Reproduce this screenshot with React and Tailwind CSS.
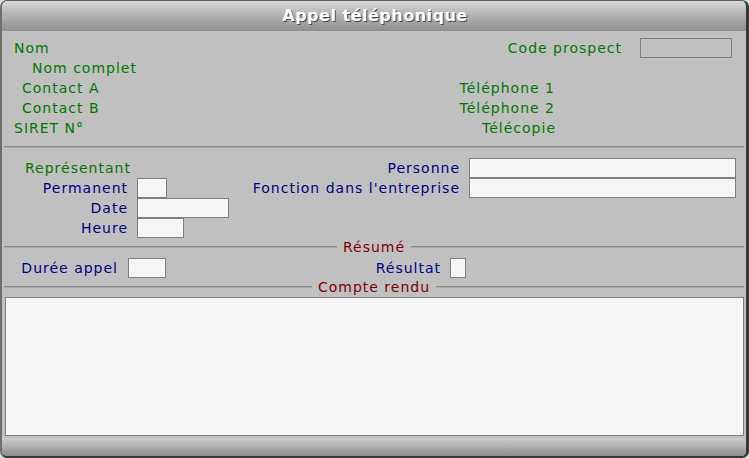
import React from "react";

const F = { fontFamily: '"DejaVu Sans", Verdana, sans-serif' };

function Line() {
  return <div className="flex-1 h-[2px] border-t border-t-[#8a8a8a] bg-[#a8a8a8]" />;
}

function Box({ w, dis }) {
  return (
    <div
      className={`h-[20px] border border-[#7f7f7f] ${dis ? "bg-[#c0c0c0]" : "bg-[#f6f6f6]"}`}
      style={{ width: w }}
    />
  );
}

export default function App() {
  const g = "text-[#007800]";
  const b = "text-[#000080]";
  const r = "text-[#800000]";
  return (
    <div className="w-[749px] h-[458px] bg-[#cfe6e2]" style={F}>
      <div className="w-full h-full rounded-[7px] overflow-hidden border-l-2 border-l-[#6e6e6e] border-r-[3px] border-r-[#383838] border-b-2 border-b-[#383838] border-t border-t-[#5a5a5a] bg-[#c0c0c0] flex flex-col text-[14px] tracking-[1px] leading-[20px]">
        <div className="h-[30px] shrink-0 bg-gradient-to-b from-[#d6d6d6] to-[#8e8e8e] flex items-center justify-center">
          <span className="text-white font-bold text-[16px] tracking-[0.5px] [text-shadow:1px_1px_0_#4a4a4a] pl-[2px]">
            Appel téléphonique
          </span>
        </div>

        <div className="mt-[7px] h-[20px] flex items-center">
          <div className={`flex-1 pl-[12px] ${g}`}>Nom</div>
          <div className={`${g} mr-[18px]`}>Code prospect</div>
          <div className="-mt-[1px]"><Box w={92} dis /></div>
          <div className="w-[14px]" />
        </div>
        <div className="h-[20px] flex items-center">
          <div className={`pl-[30px] ${g}`}>Nom complet</div>
        </div>
        <div className="h-[20px] flex items-center">
          <div className={`w-[398px] pl-[20px] ${g}`}>Contact A</div>
          <div className={`w-[155px] text-right ${g}`}>Téléphone 1</div>
        </div>
        <div className="h-[20px] flex items-center">
          <div className={`w-[398px] pl-[20px] ${g}`}>Contact B</div>
          <div className={`w-[155px] text-right ${g}`}>Téléphone 2</div>
        </div>
        <div className="h-[20px] flex items-center">
          <div className={`w-[398px] pl-[12px] ${g}`}>SIRET N°</div>
          <div className={`w-[156px] text-right ${g}`}>Télécopie</div>
        </div>

        <div className="mt-[8px] mx-[2px] flex">
          <Line />
        </div>

        <div className="mt-[10px] h-[20px] flex items-center">
          <div className={`flex-1 pl-[23px] ${g} -mt-[1px]`}>Représentant</div>
          <div className={`${b} -mt-[1px]`}>Personne</div>
          <div className="w-[9px]" />
          <Box w={267} />
          <div className="w-[10px]" />
        </div>
        <div className="h-[20px] flex items-center">
          <div className={`w-[126px] text-right ${b} -mt-[1px]`}>Permanent</div>
          <div className="w-[9px]" />
          <Box w={30} />
          <div className={`flex-1 text-right ${b} -mt-[1px]`}>Fonction dans l'entreprise</div>
          <div className="w-[9px]" />
          <Box w={267} />
          <div className="w-[10px]" />
        </div>
        <div className="h-[20px] flex items-center">
          <div className={`w-[126px] text-right ${b} -mt-[1px]`}>Date</div>
          <div className="w-[9px]" />
          <Box w={92} />
        </div>
        <div className="h-[20px] flex items-center">
          <div className={`w-[126px] text-right ${b} -mt-[1px]`}>Heure</div>
          <div className="w-[9px]" />
          <Box w={47} />
        </div>

        <div className="mt-[1px] h-[16px] mx-[2px] flex items-center">
          <Line />
          <div className={`px-[6px] ${r} -mt-[1px]`}>Résumé</div>
          <Line />
        </div>

        <div className="mt-[3px] h-[20px] flex items-center">
          <div className={`w-[116px] text-right ${b}`}>Durée appel</div>
          <div className="w-[10px]" />
          <Box w={38} />
          <div className={`w-[275px] text-right ${b}`}>Résultat</div>
          <div className="w-[9px]" />
          <Box w={16} />
        </div>

        <div className="mt-[1px] h-[16px] mx-[2px] flex items-center">
          <Line />
          <div className={`px-[6px] ${r} -mt-[1px]`}>Compte rendu</div>
          <Line />
        </div>

        <div className="mt-[2px] ml-[3px] mr-[2px] h-[139px] border border-[#7f7f7f] bg-[#f6f6f6]" />

        <div className="mt-[2px] h-[18px] bg-gradient-to-b from-[#cdcdcd] to-[#8e8e8e]" />
      </div>
    </div>
  );
}
